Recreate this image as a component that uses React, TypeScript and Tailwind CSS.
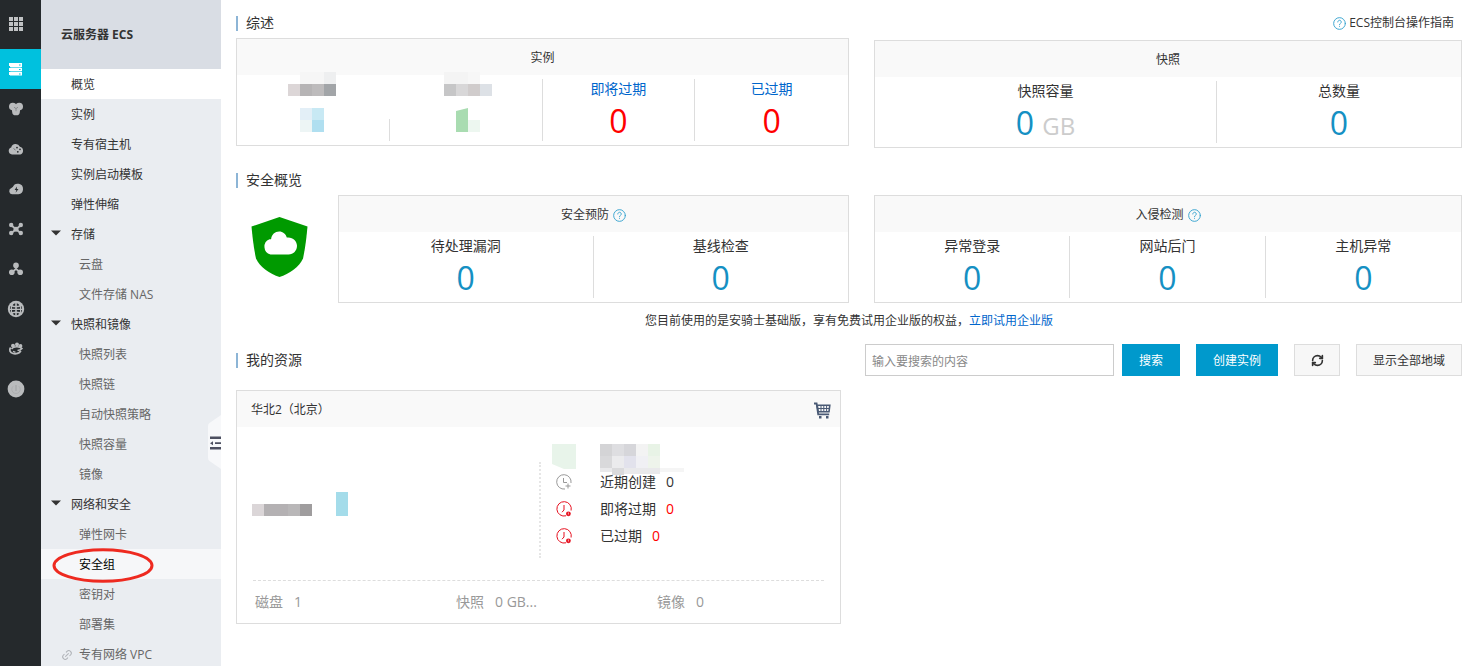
import type { ReactNode } from "react";
import { Link2, RefreshCw } from "lucide-react";

const railIcons: { label: string; art: ReactNode }[] = [
  {
    label: "云服务器",
    art: (
      <g>
        <path d="M2 2h12v4H2zM2 6.7h12v3.6H2zM2 11h12v3.6H2z" />
        <path d="M1 2h1v3H1zM1 7h1v3H1zM1 11h1v3H1z" />
        <path d="M11 3.5h1.6v1H11zM11 8h1.6v1H11zM11 12.4h1.6v1H11z" fill="#00c1de" />
        <path d="M3 6.1h10v.6H3zM3 10.4h10v.6H3z" fill="#7ce0ee" />
      </g>
    ),
  },
  {
    label: "数据库",
    art: (
      <g>
        <circle cx="4.8" cy="5.6" r="3.8" />
        <circle cx="11.2" cy="5.6" r="3.8" />
        <path d="M4 5h8v5H4z" />
        <circle cx="8" cy="10.4" r="3.9" />
        <path d="M6 6.2l2 1.4 2-1.4M8 7.6v2.6" fill="none" stroke="#7d8083" strokeWidth="0.8" />
      </g>
    ),
  },
  {
    label: "云存储",
    art: (
      <g>
        <path d="M4 13.4a3.6 3.6 0 0 1-.8-7 4.6 4.6 0 0 1 8.7-.7 4 4 0 0 1 .4 7.7z" />
        <circle cx="9" cy="6.6" r="0.9" fill="#25292c" />
        <circle cx="12" cy="8.4" r="0.8" fill="#25292c" />
        <circle cx="9.800" cy="10.800" r="0.900" fill="#25292c" />
        <path d="M5.500 7.500l2 1.500" fill="none" stroke="#6d7073" strokeWidth="0.900" />
      </g>
    ),
  },
  {
    label: "云监控",
    art: (
      <g>
        <path d="M4 13.300a3.200 3.200 0 0 1-.6-6.200 3 3 0 0 1 1.400-1 5.300 5.300 0 1 1 5.600 7.200z" />
        <path d="M9 5.500L6.600 9h1.800l-.8 2.800 2.900-3.800H8.800z" fill="#25292c" />
      </g>
    ),
  },
  {
    label: "负载均衡",
    art: (
      <g>
        <path d="M3.500 4.500l9 7.500M12.500 4.500l-9 7.500" stroke="currentColor" strokeWidth="1.800" />
        <circle cx="3.200" cy="4" r="2.200" />
        <circle cx="12.800" cy="4" r="2.200" />
        <circle cx="3.200" cy="12" r="2.200" />
        <circle cx="12.800" cy="12" r="2.200" />
        <circle cx="8" cy="8.200" r="2.500" />
      </g>
    ),
  },
  {
    label: "专有网络",
    art: (
      <g>
        <path d="M8 5v4M8 8l-4.500 3.500M8 8l4.500 3.500" stroke="currentColor" strokeWidth="1.600" />
        <circle cx="8" cy="4.400" r="2.800" />
        <circle cx="3.800" cy="11.200" r="2.800" />
        <circle cx="12.200" cy="11.200" r="2.800" />
      </g>
    ),
  },
  {
    label: "内容分发",
    art: (
      <g>
        <circle cx="8" cy="8" r="8.200" />
        <g fill="#25292c">
          <path d="M4.600 4.200q1.200.5 2.600.6V2.200Q5.400 2.600 4.600 4.200zM11.400 4.200q-1.200.5-2.600.6V2.200q1.800.4 2.600 2zM4.200 5.700q1.400.5 3 .6v1.400H4q0-1 .2-2zM11.800 5.700q-1.400.5-3 .6v1.400H12q0-1-.2-2zM4 9.100h3.200v1.500q-1.600.1-3 .5Q4 10.200 4 9.100zM12 9.100H8.800v1.500q1.600.1 3 .5.200-.9.200-2zM4.700 12.400q1.200-.4 2.500-.4v2.200q-1.700-.3-2.500-1.800zM11.300 12.400q-1.200-.4-2.500-.4v2.200q1.700-.3 2.500-1.800z" />
          <path d="M1.900 7.700q.1-1.500.9-2.700l.3.100q-.3 1.200-.3 2.600zM14.100 7.700q-.1-1.500-.9-2.700l-.3.100q.3 1.200.3 2.600zM1.900 9.100h.9q0 1.400.3 2.300l-.2.100Q2 10.400 1.900 9.100zM14.100 9.100h-.9q0 1.400-.3 2.300l.2.100q.9-1.100 1-2.400z" />
        </g>
      </g>
    ),
  },
  {
    label: "域名",
    art: (
      <g>
        <circle cx="5" cy="4.800" r="2" />
        <circle cx="9" cy="3.600" r="2" />
        <circle cx="12.500" cy="5" r="1.900" />
        <path d="M2.600 6.500c-1.800 2.500-.6 5.200 2.400 6 3 .8 6.400-.2 7.800-2.800" fill="none" stroke="currentColor" strokeWidth="1.800" />
        <path d="M3.500 8c2-2.600 7.500-3.200 10.500-.4-1.600 1.800-3 2-4.500 1.500M5 10.400l2.500 1" fill="none" stroke="currentColor" strokeWidth="1.500" />
      </g>
    ),
  },
  {
    label: "费用",
    art: (
      <g>
        <circle cx="8" cy="8" r="8.400" />
        <path d="M8 4v6" stroke="#a2a4a6" strokeWidth="1.100" />
        <path d="M5.200 5.200a4.200 4.200 0 1 0 5.600 0" fill="none" stroke="#a9abad" strokeWidth="0.800" />
      </g>
    ),
  },
];

type NavItem = { text: string; kind: "item" | "group" | "child"; on?: boolean; marked?: boolean; linked?: boolean };

const nav: NavItem[] = [
  { text: "概览", kind: "item", on: true },
  { text: "实例", kind: "item" },
  { text: "专有宿主机", kind: "item" },
  { text: "实例启动模板", kind: "item" },
  { text: "弹性伸缩", kind: "item" },
  { text: "存储", kind: "group" },
  { text: "云盘", kind: "child" },
  { text: "文件存储 NAS", kind: "child" },
  { text: "快照和镜像", kind: "group" },
  { text: "快照列表", kind: "child" },
  { text: "快照链", kind: "child" },
  { text: "自动快照策略", kind: "child" },
  { text: "快照容量", kind: "child" },
  { text: "镜像", kind: "child" },
  { text: "网络和安全", kind: "group" },
  { text: "弹性网卡", kind: "child" },
  { text: "安全组", kind: "child", marked: true },
  { text: "密钥对", kind: "child" },
  { text: "部署集", kind: "child" },
  { text: "专有网络 VPC", kind: "child", linked: true },
];

function rowTone(item: NavItem) {
  if (item.on) return "bg-white text-[#333]";
  if (item.marked) return "bg-[#f6f7f9] text-black";
  if (item.kind === "child") return "text-[#666]";
  return "text-[#333]";
}

function NavRow({ item }: { item: NavItem }) {
  return (
    <a href="#" className={`relative flex h-[30px] shrink-0 items-center pt-0.5 ${rowTone(item)}`}>
      <span
        className={`flex shrink-0 items-center ${
          item.kind === "child" ? "w-[38px] justify-end pr-1.5" : "w-[30px] justify-end pr-2.5"
        }`}
      >
        {item.kind === "group" && (
          <svg viewBox="0 0 10 6" className="mb-1 h-1.5 w-2.5" fill="#333">
            <path d="M0 0.500h10L5 5.500z" />
          </svg>
        )}
        {item.linked && <Link2 className="size-3 -rotate-45 text-[#b0b3b8]" />}
      </span>
      {item.text}
      {item.marked && (
        <svg viewBox="0 0 102 36" className="absolute -top-0.5 left-[11px] z-10 h-9 w-[102px]" fill="none">
          <ellipse cx="51" cy="18.500" rx="49" ry="15.800" stroke="#ee2a20" strokeWidth="3" />
        </svg>
      )}
    </a>
  );
}

function Help() {
  return (
    <svg
      viewBox="0 0 24 24"
      className="size-[13px] shrink-0 text-[#3aa5d0]"
      fill="none"
      stroke="currentColor"
      strokeWidth="1.800"
      strokeLinecap="round"
    >
      <circle cx="12" cy="12" r="10.800" />
      <path d="M8.800 9.200a3.200 3.200 0 1 1 5 2.600c-1.200.8-1.800 1.300-1.800 2.600M12 17.600h.01" />
    </svg>
  );
}

function Title({ children }: { children: ReactNode }) {
  return (
    <h2 className="flex h-5 items-center gap-2 text-sm leading-5">
      <span className="h-[15px] w-0.5 bg-[#8db5d6]" />
      {children}
    </h2>
  );
}

function Panel({ title, help, cols, children }: { title: string; help?: boolean; cols: string; children: ReactNode }) {
  return (
    <section className="min-w-0 flex-1 border border-[#ddd] bg-white">
      <h3 className="flex h-9 items-center justify-center gap-1 bg-[#f9f9f9] pt-0.5">
        {title}
        {help && <Help />}
      </h3>
      <div className={`grid h-[70px] pt-1 pb-1 ${cols}`}>{children}</div>
    </section>
  );
}

function Stat({ label, unit, warn }: { label: string; unit?: string; warn?: boolean }) {
  return (
    <div className="flex flex-col items-center gap-0.5 border-r border-[#ddd] last:border-r-0">
      {warn ? (
        <a href="#" className="text-sm leading-5 text-[#06c]">
          {label}
        </a>
      ) : (
        <span className="text-sm leading-5">{label}</span>
      )}
      <span className={`h-10 text-[32px] leading-10 ${warn ? "text-[#f00]" : "text-[#1590c3]"}`}>
        0{unit && <> <span className="text-2xl leading-none text-[#ccc]">{unit}</span></>}
      </span>
    </div>
  );
}

function ClockIcon({ alert }: { alert?: boolean }) {
  return (
    <svg
      viewBox="0 0 16 16"
      className={`size-4 ${alert ? "text-[#e60f1e]" : "text-[#999]"}`}
      fill="none"
      stroke="currentColor"
      strokeWidth="1"
    >
      {alert ? (
        <g>
          <path d="M10 14.800A7.200 7.200 0 1 1 15.100 9.500" />
          <path d="M8 4v5l-2 2.200" />
          <circle cx="12.400" cy="12.800" r="2.400" fill="currentColor" stroke="none" />
          <path d="M12.400 11.500v1.400M12.400 13.500v.6" stroke="#fff" strokeWidth="0.700" />
        </g>
      ) : (
        <g>
          <path d="M9 15A7.200 7.200 0 1 1 15 9" />
          <path d="M7.500 4v4.500h3.500" />
          <path d="M12 9.500v5M9.500 12h5" />
        </g>
      )}
    </svg>
  );
}

function EventRow({ label, alert }: { label: string; alert?: boolean }) {
  return (
    <li className="relative flex h-[27px] items-center gap-6 text-sm leading-5">
      <span className="flex w-6 justify-center">
        <ClockIcon alert={alert} />
      </span>
      <span className="flex gap-2.5">
        {label}
        <span className={alert ? "text-[#f00]" : ""}>0</span>
      </span>
    </li>
  );
}

export default function App() {
  return (
    <div className="flex h-screen overflow-hidden bg-white font-['Open_Sans','Noto_Sans_CJK_SC',sans-serif] text-xs leading-5 text-[#333]">
      <nav aria-label="产品" className="flex w-[41px] shrink-0 flex-col bg-[#25292c]">
        <a href="#" aria-label="全部产品" className="flex h-[49px] items-center pl-2 text-[#c0c2c4]">
          <svg viewBox="0 0 16 16" className="size-4" fill="currentColor">
            <path d="M1 0h4v4H1zM6 0h4v4H6zM11 0h4v4h-4zM1 5h4v4H1zM6 5h4v4H6zM11 5h4v4h-4zM1 10h4v4H1zM6 10h4v4H6zM11 10h4v4h-4z" />
          </svg>
        </a>
        {railIcons.map((icon, i) => (
          <a
            key={icon.label}
            href="#"
            aria-label={icon.label}
            className={`flex h-10 items-center pl-2 ${i === 0 ? "bg-[#00c1de] text-white" : "text-[#b9bbbd]"}`}
          >
            <svg viewBox="0 0 16 16" className="size-4 overflow-visible" fill="currentColor">
              {icon.art}
            </svg>
          </a>
        ))}
      </nav>

      <aside className="relative flex w-[180px] shrink-0 flex-col bg-[#eaedf1]">
        <h1 className="flex h-[69px] shrink-0 items-center bg-[#d9dde4] pl-5 font-bold">云服务器 ECS</h1>
        <nav aria-label="云服务器 ECS" className="flex flex-col">
          {nav.map((item) => (
            <NavRow key={item.text} item={item} />
          ))}
        </nav>
        <button type="button" aria-label="收起菜单" className="absolute top-[415px] right-0 h-[54px] w-[13px]">
          <svg viewBox="0 0 13 54" className="h-[54px] w-[13px]">
            <path d="M13 0v54L1.500 46Q0 45 0 43V11Q0 9 1.500 8z" fill="#f7f8fa" />
            <path d="M2 21.500h11v2.500H2zM7 27.200h6v1.800H7zM2 32h11v2.500H2zM2 28.200l3-2v4z" fill="#4c4f60" />
          </svg>
        </button>
      </aside>

      <main className="min-w-0 flex-1 pt-[13px] pr-2 pl-[15px]">
        <div className="grid grid-cols-[613fr_588fr] gap-[25px]">
          <div className="flex min-w-0 flex-col gap-[5px]">
            <Title>综述</Title>
            <div className="flex">
              <Panel title="实例" cols="grid-cols-4">
                <div className="flex flex-col pl-[51px]">
                  <svg viewBox="0 0 48 60" className="-mt-[7px] h-[60px] w-12">
                    <path d="M12 0h24v12H12z" fill="#f6f6f6" />
                    <path d="M36 0h12v12H36z" fill="#eeeff0" />
                    <path d="M0 12h12v12H0z" fill="#dcd6d7" />
                    <path d="M12 12h12v12H12z" fill="#b6b4b5" />
                    <path d="M24 12h12v12H24z" fill="#bdbbbc" />
                    <path d="M36 12h12v12H36z" fill="#a2a5a8" />
                    <path d="M12 36h12v12H12z" fill="#e3eff7" />
                    <path d="M24 36h12v12H24z" fill="#c8e9f4" />
                    <path d="M12 48h12v12H12z" fill="#edf5f5" />
                    <path d="M24 48h12v12H24z" fill="#b0dff0" />
                  </svg>
                </div>
                <div className="relative flex flex-col items-center border-r border-[#ddd]">
                  <span className="absolute bottom-0 -left-px h-[22px] w-px bg-[#ddd]" />
                  <svg viewBox="-2 0 48 60" className="-mt-[7px] h-[60px] w-12 overflow-visible">
                    <path d="M0 0h24v12H0z" fill="#f4f4f4" />
                    <path d="M24 0h12v12H24z" fill="#f7f7f7" />
                    <path d="M0 12h12v12H0z" fill="#c6c6c7" />
                    <path d="M12 12h12v12H12z" fill="#d8d7d8" />
                    <path d="M24 12h12v12H24z" fill="#d0cccc" />
                    <path d="M36 12h12v12H36z" fill="#dde1e6" />
                    <path d="M12 39l12-3v24H12z" fill="#a9dcb1" />
                    <path d="M24 48h12v12H24z" fill="#edf7f0" />
                  </svg>
                </div>
                <Stat label="即将过期" warn />
                <Stat label="已过期" warn />
              </Panel>
            </div>
          </div>
          <div className="flex min-w-0 flex-col gap-[7px]">
            <a href="#" className="flex h-5 items-center gap-[3px] self-end pr-2">
              <Help />
              ECS控制台操作指南
            </a>
            <div className="flex">
              <Panel title="快照" cols="grid-cols-[342fr_244fr]">
                <Stat label="快照容量" unit="GB" />
                <Stat label="总数量" />
              </Panel>
            </div>
          </div>
        </div>

        <div className="mt-[22px] flex flex-col gap-[5px]">
          <Title>安全概览</Title>
          <div className="grid grid-cols-[613fr_588fr] gap-[25px]">
            <div className="flex min-w-0">
              <div className="w-[102px] shrink-0 pt-[22px] pl-[15px]">
                <svg viewBox="0 0 57 60" className="h-[60px] w-[57px]">
                  <path
                    d="M28.500 0L56.500 9.500C55.500 20 54.500 30 52 41.500 48.500 50 38 57 28.500 60 19 57 8.500 50 5 41.500 2.500 30 1.500 20 .5 9.500z"
                    fill="#009a00"
                  />
                  <path
                    d="M19.500 37.500a8 8 0 0 1-1-15.200q1-.2 1.600-.1C20.600 17.500 24 14.500 28.200 14.500c3.600 0 6.600 2.400 7.600 6 6-.7 10.200 3.400 10.200 8.300 0 4.800-3.500 8.700-8.500 8.700z"
                    fill="#fff"
                  />
                </svg>
              </div>
              <Panel title="安全预防" help cols="grid-cols-2">
                <Stat label="待处理漏洞" />
                <Stat label="基线检查" />
              </Panel>
            </div>
            <div className="flex min-w-0">
              <Panel title="入侵检测" help cols="grid-cols-3">
                <Stat label="异常登录" />
                <Stat label="网站后门" />
                <Stat label="主机异常" />
              </Panel>
            </div>
          </div>
        </div>

        <p className="mt-2 text-center">
          您目前使用的是安骑士基础版，享有免费试用企业版的权益，
          <a href="#" className="text-[#06c]">
            立即试用企业版
          </a>
        </p>

        <div className="mt-[13px] flex h-8 items-center justify-between">
          <Title>我的资源</Title>
          <form className="flex gap-4" onSubmit={(e) => e.preventDefault()}>
            <div className="flex gap-2">
              <input
                type="search"
                aria-label="搜索"
                placeholder="输入要搜索的内容"
                className="h-8 w-[249px] border border-[#ccc] bg-white px-1.5 pt-0.5 outline-none placeholder:text-[#888]"
              />
              <button type="submit" className="h-8 w-[58px] bg-[#0099cc] pt-0.5 text-white">
                搜索
              </button>
            </div>
            <button type="button" className="h-8 w-[82px] bg-[#0099cc] pt-0.5 text-white">
              创建实例
            </button>
            <button
              type="button"
              aria-label="刷新"
              className="flex h-8 w-[46px] items-center justify-center border border-[#ddd] bg-[#f7f7f7]"
            >
              <RefreshCw className="size-[13px]" strokeWidth={3} />
            </button>
            <button type="button" className="h-8 w-[106px] border border-[#ddd] bg-[#f7f7f7] pt-0.5">
              显示全部地域
            </button>
          </form>
        </div>

        <section className="mt-3.5 w-[calc(50%-8px)] border border-[#ddd]">
          <header className="flex h-9 items-center justify-between bg-[#f9f9f9] pt-0.5 pr-[9px] pl-3.5">
            <h3>华北2（北京）</h3>
            <a href="#" aria-label="购买">
              <svg viewBox="0 0 17 17" className="size-[17px]" fill="none" stroke="#4a5a75">
                <path d="M0 1.500h2.600l1.600 10.800h11" strokeWidth="1.800" />
                <path d="M3.200 3.200h12.600l-.8 6.600H4.200z" strokeWidth="1.600" />
                <path d="M3.600 6.500h12M7 3v7M9.800 3v7M12.600 3v7" strokeWidth="1" />
                <path d="M5 14h2.500v2.500H5zM12 14h2.500v2.500H12z" fill="#4a5a75" stroke="none" />
              </svg>
            </a>
          </header>
          <div className="flex h-[153px]">
            <div className="w-[302px] shrink-0 pt-[65px] pl-[15px]">
              <svg viewBox="0 0 96 24" className="h-6 w-24">
                <path d="M0 12h12v12H0z" fill="#dbd6d8" />
                <path d="M12 12h24v12H12z" fill="#b4b1b3" />
                <path d="M36 12h12v12H36z" fill="#b9b7b8" />
                <path d="M48 12h12v12H48z" fill="#9f9d9e" />
                <path d="M84 0h12v24H84z" fill="#a4dcea" />
              </svg>
            </div>
            <div className="mt-[35px] h-24 border-l-2 border-dotted border-[#e6e6e6]" />
            <div className="pt-[17px] pl-[11px]">
              <svg viewBox="0 0 132 24" className="h-6 w-[132px] overflow-visible">
                <path d="M0 0h24v25H12L0 20z" fill="#e8f4ea" />
                <path d="M48 0h12v12H48z" fill="#d4d4d6" />
                <path d="M60 0h12v12H60z" fill="#dedee1" />
                <path d="M72 0h12v12H72z" fill="#d6d6da" />
                <path d="M84 0h12v12H84z" fill="#f3f3f3" />
                <path d="M96 0h12v12H96z" fill="#e8f3e6" />
                <path d="M48 12h12v12H48z" fill="#d9d9db" />
                <path d="M60 12h12v12H60z" fill="#ebebed" />
                <path d="M72 12h12v12H72z" fill="#e2e2ec" />
                <path d="M84 12h12v12H84z" fill="#f0f0f4" />
                <path d="M96 12h12v12H96z" fill="#eef4eb" />
                <path d="M48 24h12v4H48zM72 24h36v6H72z" fill="#e9e9eb" />
                <path d="M60 24h12v7H60z" fill="#dadadc" />
                <path d="M108 24h24v4h-24z" fill="#f5f5f5" />
              </svg>
              <ul>
                <EventRow label="近期创建" />
                <EventRow label="即将过期" alert />
                <EventRow label="已过期" alert />
              </ul>
            </div>
          </div>
          <div className="mx-4 border-t border-dashed border-[#ddd]" />
          <dl className="grid h-[42px] grid-cols-3 items-center text-sm leading-5 text-[#999]">
            <div className="flex gap-[11px] pl-[18px]">
              <dt>磁盘</dt>
              <dd>1</dd>
            </div>
            <div className="flex gap-[11px] pl-[18px]">
              <dt>快照</dt>
              <dd>0 GB...</dd>
            </div>
            <div className="flex gap-[11px] pl-[18px]">
              <dt>镜像</dt>
              <dd>0</dd>
            </div>
          </dl>
        </section>
      </main>
    </div>
  );
}
